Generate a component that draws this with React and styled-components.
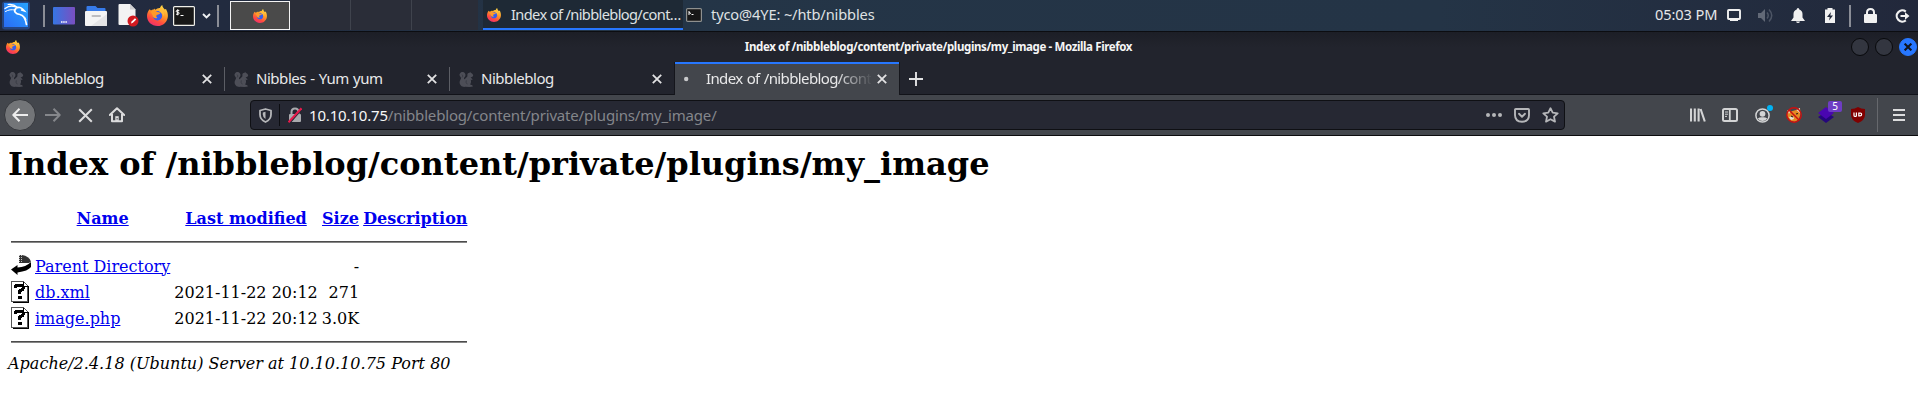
import React from 'react';
import styled, { createGlobalStyle, css } from 'styled-components';

const GlobalStyle = createGlobalStyle`
  html, body { margin: 0; padding: 0; background: #fff; }
  body { overflow: hidden; }
  svg { display: block; flex: none; }
`;

const Screen = styled.div`
  width: 1918px;
  height: 412px;
  display: flex;
  flex-direction: column;
  background: #fff;
  overflow: hidden;
  font-family: 'Noto Sans', 'Open Sans', sans-serif;
`;

/* ---------- desktop panel ---------- */

const Panel = styled.header`
  height: 32px;
  box-sizing: border-box;
  border-bottom: 1px solid #0c0d11;
  display: flex;
  align-items: stretch;
  background: linear-gradient(90deg, #222a3f 0%, #222b3f 12%, #243547 30%, #243446 75%, #22283b 100%);
`;

const Slot = styled.div`
  width: ${(p) => p.$w}px;
  flex: none;
  display: flex;
  align-items: center;
  justify-content: center;
`;

const PanelRule = styled.div`
  width: 2px;
  height: 22px;
  margin: 5px ${(p) => p.$right}px 0 ${(p) => p.$left}px;
  background: #8a8d96;
  flex: none;
`;

const Workspaces = styled.div`
  display: flex;
  width: 248px;
  flex: none;
  padding-bottom: 1px;
`;

const Workspace = styled.div`
  box-sizing: border-box;
  width: 61px;
  background: #2a2d38;
  border-right: 1px solid #3f434d;
  display: flex;
  align-items: center;
  justify-content: center;
  ${(p) => p.$last && css`border-right: 0; flex: 1;`}
  ${(p) => p.$active && css`
    width: 60px;
    height: 29px;
    margin-top: 1px;
    background: #4a4a4a;
    border: 1px solid #f4f4f4;
  `}
`;

const Task = styled.div`
  box-sizing: border-box;
  width: ${(p) => p.$w}px;
  height: 30px;
  padding-left: ${(p) => p.$pad}px;
  display: flex;
  align-items: center;
  gap: ${(p) => p.$gap}px;
  flex: none;
  color: #dfe1e3;
  ${(p) => p.$active && css`
    background: #1e2935;
    box-shadow: inset 0 -2px #2777ff;
  `}
`;

const TaskLabel = styled.span`
  padding-bottom: 2px;
  font-size: 14.6px;
  line-height: 20px;
  letter-spacing: ${(p) => p.$ls}px;
  white-space: nowrap;
`;

const Clock = styled.div`
  margin-left: auto;
  width: 63px;
  font-size: 14.6px;
  line-height: 28px;
  letter-spacing: -0.1px;
  color: #e6e7e9;
  white-space: nowrap;
`;

const Tray = styled.div`
  display: flex;
  width: 200px;
  flex: none;
`;

/* ---------- window ---------- */

const TitleBar = styled.div`
  height: 30px;
  flex: none;
  display: flex;
  align-items: center;
  background: linear-gradient(#1c1e26, #22242d 50%);
`;

const TitleText = styled.div`
  flex: 1;
  text-align: center;
  font-size: 11.5px;
  font-weight: 700;
  line-height: 20px;
  letter-spacing: -0.38px;
  color: #f5f5f5;
  white-space: nowrap;
`;

const WindowButtons = styled.div`
  display: flex;
  gap: 6px;
  padding-right: 1px;
`;

const WindowButton = styled.div`
  box-sizing: border-box;
  width: 18px;
  height: 18px;
  border-radius: 50%;
  border: 1px solid ${(p) => (p.$close ? '#2777ff' : '#08090c')};
  background: ${(p) => (p.$close ? '#2777ff' : '#333640')};
  display: flex;
  align-items: center;
  justify-content: center;
`;

const TabStrip = styled.div`
  height: 33px;
  flex: none;
  display: flex;
  background: #22242d;
  box-shadow: inset 0 -1px #121319;
`;

const Tab = styled.div`
  box-sizing: border-box;
  position: relative;
  width: 225px;
  height: 33px;
  padding: 1px 13px 0 9px;
  display: flex;
  align-items: center;
  color: #e9e9ea;
  ${(p) => p.$rule && css`
    &::after {
      content: '';
      position: absolute;
      right: 0;
      top: 5px;
      width: 1px;
      height: 24px;
      background: #5c5e65;
    }
  `}
  ${(p) => p.$active && css`
    width: 224px;
    padding-right: 12px;
    background: #43464c;
    box-shadow: inset 0 2px #2777ff, -1px 0 #15161c, 1px 0 #15161c;
  `}
`;

const TabTitle = styled.div`
  flex: 1;
  margin-left: 7px;
  padding-bottom: 2px;
  font-size: 15px;
  line-height: 22px;
  letter-spacing: -0.46px;
  word-spacing: 0.8px;
  white-space: nowrap;
  overflow: hidden;
  ${(p) => p.$fade && css`
    margin-right: 6px;
    letter-spacing: -0.62px;
    mask-image: linear-gradient(90deg, #000 130px, transparent 167px);
  `}
`;

const NavBar = styled.div`
  box-sizing: border-box;
  height: 41px;
  flex: none;
  border-bottom: 1px solid #0c0c0e;
  background: #43464c;
  display: flex;
  align-items: center;
`;

const BackButton = styled.div`
  box-sizing: border-box;
  width: 32px;
  height: 32px;
  margin: 0 1px 0 4px;
  border-radius: 50%;
  border: 1px solid #35373c;
  background: #737578;
  display: flex;
  align-items: center;
  justify-content: center;
`;

const UrlBar = styled.div`
  box-sizing: border-box;
  width: 1315px;
  height: 30px;
  margin-left: 117px;
  border: 1px solid #0f1014;
  border-radius: 4px;
  background: #262833;
  display: flex;
  align-items: center;
`;

const UrlRule = styled.div`
  width: 1px;
  height: 22px;
  background: #0c0d11;
`;

const UrlText = styled.div`
  flex: 1;
  font-size: 15px;
  line-height: 24px;
  letter-spacing: -0.17px;
  color: #84868b;
  white-space: nowrap;
  b { font-weight: 400; color: #f8f8f8; }
`;

const Extensions = styled.div`
  display: flex;
  align-items: center;
  margin-left: 117px;
`;

const BadgeHost = styled(Slot)`
  position: relative;
  height: 32px;
`;

const CountBadge = styled.span`
  position: absolute;
  left: 18px;
  top: 2px;
  width: 14px;
  height: 11px;
  border-radius: 2px;
  background: #6e3dc4;
  color: #fff;
  font-size: 10px;
  line-height: 11px;
  text-align: center;
`;

const NoticeDot = styled.span`
  position: absolute;
  left: 21px;
  top: 6px;
  width: 6px;
  height: 6px;
  border-radius: 50%;
  background: #00b3f4;
`;

const NavRule = styled.div`
  width: 1px;
  height: 34px;
  margin: 0 5px 0 3px;
  background: #66686d;
`;

/* ---------- document ---------- */

const Page = styled.main`
  flex: 1;
  padding: 9px 8px 8px;
  color: #000;
  font-family: 'DejaVu Serif', serif;
  font-size: 16px;
  line-height: 19px;
`;

const Heading = styled.h1`
  margin: 0 0 21px;
  font-size: 32px;
  line-height: 38px;
  font-weight: 700;
  white-space: nowrap;
`;

const Listing = styled.table`
  border-spacing: 2px;
  border-collapse: separate;
  white-space: nowrap;
  th, td { padding: 1px; vertical-align: middle; }
  tr { height: 24px; }
`;

const Cell = styled.td`
  text-align: ${(p) => (p.$right ? 'right' : 'left')};
`;

const IconCell = styled.td`
  width: 20px;
  height: 22px;
`;

const Link = styled.a`
  color: #0000ee;
  text-decoration: underline;
`;

const Rule = styled.hr`
  box-sizing: border-box;
  height: 2px;
  margin: 8px 0;
  border: 0;
  border-top: 1px solid #4c4c4c;
  background: #868686;
`;

const RuleRow = styled.tr`
  && { height: 20px; }
`;

const Address = styled.address`
  font-style: italic;
  letter-spacing: 0.02px;
`;

/* ---------- icons ---------- */

const Firefox = ({ size }) => (
  <svg width={size} height={size} viewBox="0 0 22 22">
    <defs>
      <linearGradient id="fx" x1="0.8" y1="0" x2="0.3" y2="1">
        <stop offset="0" stopColor="#ffe04a" />
        <stop offset="0.45" stopColor="#ff9526" />
        <stop offset="0.75" stopColor="#ff4a41" />
        <stop offset="1" stopColor="#ee2f70" />
      </linearGradient>
    </defs>
    <path d="M2.8 4.4 4.2 5.8C5.2 4.9 6 4.7 7 4.7L8 3.6 8.4 5C10 4.2 11.8 3 13.6 3.2 14 1.7 15 .6 16 0c.2 2.2 1.3 3.4 2.7 4.8l1.2-.7c1.2 2.2 2.1 4.7 2 7.3C21.700 17.500 17 22 11 22S0 17.500 0 11.500C0 8.500 1.200 6 2.800 4.400Z" fill="url(#fx)" />
    <circle cx="11" cy="11.300" r="4.900" fill="#355df0" />
    <path d="M4 7c2-1.500 4.500-1.500 6.500.2L14 8c-.5 1.700-2.500 1.800-3.700 2.300-.8 1.400-1 2.200.6 3.200-2.600 1.200-4.800-.3-5.200-2.700Z" fill="#ff9a2a" />
    <path d="M12.500 3.500c4 1 6 4.500 5 8.500-.6-2.500-2-4.300-4.300-5Z" fill="#ffbd3b" />
  </svg>
);

const KaliLogo = () => (
  <svg width="31" height="31" viewBox="0 0 31 31">
    <defs>
      <linearGradient id="kl" x1="0" y1="1" x2="1" y2="0">
        <stop offset="0" stopColor="#2a6cf5" />
        <stop offset="1" stopColor="#27a3ff" />
      </linearGradient>
    </defs>
    <rect x="2" y="1.500" width="28" height="28" rx="3" fill="#2777ff" opacity="0.35" />
    <rect x="4" y="3" width="24" height="24" fill="url(#kl)" />
    <g fill="none" stroke="#fff" strokeLinecap="round">
      <path d="M5 8.500C9 5.500 14 5.500 18 8" strokeWidth="1.300" />
      <path d="M8 4.500c4-.6 7 .5 9.500 2.800" strokeWidth="1.100" />
      <path d="M5.500 11.500c3-1.800 6-2.200 9.500-1.500" strokeWidth="1" />
      <path d="M17 7.500c3-.8 5 .5 7.500 3.500l-3-1" strokeWidth="1.500" />
      <path d="M16 8.500c-3 2.500-.5 5.500 4 6 3.500.6 5.500 4.500 6.500 10" strokeWidth="1.700" />
      <path d="M21 15.500c3 .5 4.300 1.500 5 4" strokeWidth="1" />
    </g>
  </svg>
);

const DesktopIcon = () => (
  <svg width="22" height="18" viewBox="0 0 22 18">
    <defs>
      <linearGradient id="dk"><stop offset="0" stopColor="#3676e4" /><stop offset="1" stopColor="#7a4fc0" /></linearGradient>
    </defs>
    <rect width="22" height="17.500" rx="1" fill="url(#dk)" />
    <path d="M8 15h6" stroke="#fff" strokeWidth="1.500" strokeDasharray="1.500 .7" />
  </svg>
);

const FolderIcon = () => (
  <svg width="22" height="20" viewBox="0 0 22 20">
    <path d="M1.500 1q0-1 1-1h8l2 2h7q1 0 1 1v4h-19Z" fill="#367bea" />
    <rect y="5" width="22" height="15" rx="1" fill="#f4f4f4" />
    <path d="M22 8v11q0 1-1 1H6Z" fill="#e4e4e6" />
    <rect x="6.500" y="9" width="9.500" height="2" rx="1" fill="#bdbdc0" />
  </svg>
);

const EditorIcon = () => (
  <svg width="21" height="23" viewBox="0 0 21 23">
    <path d="M1.500 0H12l5.500 5.500V21H1.500Q.5 21 .5 20V1q0-1 1-1Z" fill="#f3f3f3" />
    <path d="M12 0v5.500h5.500Z" fill="#cfcfd2" />
    <circle cx="15" cy="17" r="5.500" fill="#d21a20" />
    <path d="m13 19.500.6-2 3.400-3.200 1.300 1.300-3.400 3.200Z" fill="#fff" />
  </svg>
);

const PanelTerminal = () => (
  <svg width="22" height="20" viewBox="0 0 22 20">
    <rect x=".6" y=".6" width="20.800" height="18.800" rx="1" fill="#171717" stroke="#efefe9" strokeWidth="1.200" />
    <path d="M6.300 4.400H4.200q-1 .1-1 .9t1 .9h1q1 .2 1 1T5.200 8.200H3M4.700 3.300v6M7.500 9.500h3" fill="none" stroke="#fff" strokeWidth="1" />
  </svg>
);

const TaskTerminal = () => (
  <svg width="16" height="14" viewBox="0 0 16 14">
    <rect x=".6" y=".6" width="14.800" height="12.800" rx="1" fill="#171717" stroke="#8e908f" strokeWidth="1.200" />
    <path d="M3 3v4M3 4.500l2 1M5.500 6.500h2" fill="none" stroke="#fff" strokeWidth="1" />
  </svg>
);

const Chevron = () => (
  <svg width="9" height="6" viewBox="0 0 9 6">
    <path d="m1 1 3.500 3.500L8 1" fill="none" stroke="#eef0f2" strokeWidth="1.900" />
  </svg>
);

const DisplayIcon = () => (
  <svg width="14" height="13" viewBox="0 0 14 13">
    <rect x="1" y="1" width="12" height="9" rx=".8" fill="none" stroke="#f1f1f1" strokeWidth="1.900" />
    <path d="M3 10.500h8v1.500H3Z" fill="#f1f1f1" />
  </svg>
);

const VolumeIcon = () => (
  <svg width="16" height="15" viewBox="0 0 16 15">
    <path d="M0 5h3l4-4v13L3 10H0Z" fill="#626977" />
    <path d="M9 4.500q2.500 3 0 6M11 1.500q5.500 6 0 12" fill="none" stroke="#4d5565" strokeWidth="1.500" />
  </svg>
);

const BellIcon = () => (
  <svg width="14" height="15" viewBox="0 0 14 15">
    <path d="M7 0q1.300 0 1.300 1.500Q11.500 2.500 11.500 6v3.500L14 13H0l2.500-3.500V6q0-3.500 3.200-4.500Q5.700 0 7 0ZM5 13.500h4Q8.500 15 7 15t-2-1.500Z" fill="#f1f1f1" />
  </svg>
);

const BatteryIcon = () => (
  <svg width="10" height="15" viewBox="0 0 10 15">
    <path d="M2.500 0h5v1.500H10V15H0V1.500h2.500Z" fill="#f1f1f1" />
    <path d="M6 4 2 9h2.700L4 12.500 8 7.500H5.300Z" fill="#22293b" />
  </svg>
);

const PanelLock = () => (
  <svg width="13" height="15" viewBox="0 0 13 15">
    <rect y="6" width="13" height="9" rx="1" fill="#f1f1f1" />
    <path d="M3 7V4.500Q3 1 6.500 1T10 4.500V7" fill="none" stroke="#f1f1f1" strokeWidth="2" />
  </svg>
);

const LogoutIcon = () => (
  <svg width="15" height="14" viewBox="0 0 15 14">
    <path d="M10.800 2.600A5.600 5.600 0 1 0 10.800 11.400" fill="none" stroke="#f1f1f1" strokeWidth="2.200" />
    <path d="M5.500 6H10V3.300L14.500 7 10 10.700V8H5.500Z" fill="#f1f1f1" />
  </svg>
);

const Squirrel = () => (
  <svg width="15" height="17" viewBox="0 0 15 17">
    <path d="M6.500 15.800C3 16.500.600 14 .600 11.200c0-2.200 2-3 1.200-4.700S-.2 4 1 2.400 4.700.500 5.900 2.200s.4 3.300-.6 4.300c-.5 1-.3 1.700.5 1.700.9-1.500 2.400-2 2.700-3.200C7.900 3 9 1.800 10.500 1.800l.8-1 .5 1.300c1.600.4 2.600 1.600 2.300 2.900-.5 1-2 1.200-2.500 1.500l2 1.700-.6.900-1.400-.7c.7 1.500.6 3.500-.5 5l2.200.8.600 1.300-3.400.5Z" fill="#4d4e57" />
    <path d="M3 3.500q2 1.500 0 3M7.300 9.300q-1 2 1 4" stroke="#3a3c45" fill="none" />
  </svg>
);

const CloseIcon = ({ size, width = 1.8, color = '#e2e2e3' }) => (
  <svg width={size} height={size} viewBox="0 0 10 10">
    <path d="m.8.800 8.400 8.400M9.200.800.800 9.200" stroke={color} strokeWidth={width} />
  </svg>
);

const PlusIcon = () => (
  <svg width="14" height="14" viewBox="0 0 14 14">
    <path d="M7 0v14M0 7h14" stroke="#e2e2e3" strokeWidth="1.900" />
  </svg>
);

const Spinner = () => (
  <svg width="15" height="16" viewBox="0 0 15 16"><circle cx="2.200" cy="8" r="2.200" fill="#c8c9cb" /></svg>
);

const Arrow = ({ flip, color }) => (
  <svg width="16" height="14" viewBox="0 0 16 14">
    <path
      d={flip ? 'M0 7h15M8.500.8 14.700 7l-6.200 6.200' : 'M16 7H1M7.500.8 1.300 7l6.200 6.200'}
      fill="none" stroke={color} strokeWidth="2" strokeLinejoin="round"
    />
  </svg>
);

const HomeIcon = () => (
  <svg width="16" height="16" viewBox="0 0 16 16">
    <path d="M.8 8 8 1.200 15.200 8M3 7v7.200h10V7" fill="none" stroke="#dcdcdd" strokeWidth="2" strokeLinejoin="round" strokeLinecap="round" />
    <path d="M6.300 14V9.200h3.400V14" fill="#dcdcdd" />
    <rect x="7.600" y="11" width="1" height="1.500" fill="#43464c" />
  </svg>
);

const ShieldIcon = () => (
  <svg width="13" height="15" viewBox="0 0 13 15">
    <path d="M6.500 1 12 2.500v4q0 5-5.500 7.500Q1 11.500 1 6.500v-4Z" fill="none" stroke="#b5b6b9" strokeWidth="1.800" strokeLinejoin="round" />
    <path d="M6.500 3.800v7.300Q3.800 9.500 3.800 6.500V4.400Z" fill="#b5b6b9" />
  </svg>
);

const InsecureLock = () => (
  <svg width="14" height="16" viewBox="0 0 14 16">
    <rect x="1" y="7" width="12" height="8" rx="1" fill="#a9aaae" />
    <path d="M3.500 8V5Q3.500 1.500 7 1.500T10.500 5v3" fill="none" stroke="#a9aaae" strokeWidth="2" />
    <path d="m1.500 16.300 13-15" stroke="#262833" strokeWidth="1.500" />
    <path d="m.5 15.200 13-14" stroke="#e8194b" strokeWidth="2" />
  </svg>
);

const DotsIcon = () => (
  <svg width="16" height="4" viewBox="0 0 16 4" fill="#b5b6b9">
    <circle cx="2" cy="2" r="2" /><circle cx="8" cy="2" r="2" /><circle cx="14" cy="2" r="2" />
  </svg>
);

const PocketIcon = () => (
  <svg width="16" height="15" viewBox="0 0 16 15" fill="none" stroke="#b5b6b9" strokeWidth="1.900" strokeLinecap="round" strokeLinejoin="round">
    <path d="M1.800 1h12.400q.8 0 .8.800V7q0 6.500-7 6.800Q1 13.500 1 7V1.800Q1 1 1.800 1Z" />
    <path d="M5 5.800 8 8.700l3-2.900" />
  </svg>
);

const StarIcon = () => (
  <svg width="17" height="16" viewBox="0 0 17 16">
    <path d="m8.500 1.200 2.200 4.500 5 .6-3.700 3.400 1 4.900-4.500-2.400L4 14.600l1-4.900L1.300 6.300l5-.6Z" fill="none" stroke="#b5b6b9" strokeWidth="1.800" strokeLinejoin="round" />
  </svg>
);

const LibraryIcon = () => (
  <svg width="16" height="14" viewBox="0 0 16 14">
    <path d="M1 .5v13M4.800 .5v13M8.600 .5v13M10.600 1l4.200 12.500" stroke="#d3d4d5" strokeWidth="2.100" />
  </svg>
);

const SidebarIcon = () => (
  <svg width="16" height="14" viewBox="0 0 16 14" fill="none" stroke="#d3d4d5">
    <rect x="1" y="1" width="14" height="12" rx="1.500" strokeWidth="2" />
    <path d="M7.800 1v12" strokeWidth="1.800" />
    <path d="M3 4h3M3 6.200h3M3 8.400h2" strokeWidth="1" />
  </svg>
);

const AccountIcon = () => (
  <svg width="15" height="15" viewBox="0 0 15 15">
    <circle cx="7.500" cy="7.500" r="6.600" fill="none" stroke="#d3d4d5" strokeWidth="1.500" />
    <circle cx="7.500" cy="5.800" r="2.900" fill="#d3d4d5" />
    <path d="M2.800 10.500Q5 8.800 7.500 9.300q2.500-.5 4.700 1.200Q10.500 13 7.500 13t-4.700-2.500Z" fill="#d3d4d5" />
  </svg>
);

const FoxyIcon = () => (
  <svg width="16" height="16" viewBox="0 0 16 16">
    <path d="M1.500 3 5 4.500 10 3l4-2 .5 6-1.500 5-4 3-5-1.500L1 9Z" fill="#e58a24" />
    <path d="m1.500 3 3 1-1.500 3ZM14 1l-3.500 2L14 6ZM3 10l4-1 1 3-3 1Z" fill="#e6dfd5" />
    <path d="m5 9 2 1M10 7l2-.5" stroke="#2b1a10" strokeWidth="1.200" />
    <circle cx="8" cy="8" r="7.200" fill="none" stroke="#cc1010" strokeWidth="1.400" />
    <path d="m3 3 10 10" stroke="#cc1010" strokeWidth="1.500" />
  </svg>
);

const LayersIcon = () => (
  <svg width="16" height="16" viewBox="0 0 16 16">
    <path d="m0 10 8-5 8 5-8 6Z" fill="#25067c" />
    <path d="m0 6 8-6 8 6-8 6Z" fill="#4a06b0" />
  </svg>
);

const UBlockIcon = () => (
  <svg width="14" height="16" viewBox="0 0 14 16">
    <path d="M7 0q3 2 7 2v6q0 5-7 8-7-3-7-8V2q4 0 7-2Z" fill="#800000" />
    <path d="M3 5.500v3q0 1 1.200 1t1.200-1v-3M7.800 6.100v2.800h1.400q1.400 0 1.400-1.400T9.200 6.100Z" fill="none" stroke="#fff" strokeWidth="1.200" />
  </svg>
);

const MenuIcon = () => (
  <svg width="12" height="12" viewBox="0 0 12 12">
    <path d="M0 1h12M0 6h12M0 11h12" stroke="#dcdcdd" strokeWidth="1.900" />
  </svg>
);

const BackIcon = () => (
  <svg width="20" height="22" viewBox="0 0 20 22">
    <path d="M8 0h3q7 1 9 6.500l-2 1.500H8Z" fill="#333" />
    <path d="M8.500 0v7M10.500 0v7" stroke="#fff" strokeWidth=".7" strokeDasharray="1 1" />
    <path d="m0 14.500 6.500-4.500v2.500Q15 12 20 7v5q-3 4-13.500 5.500V20Z" fill="#000" />
  </svg>
);

const UnknownIcon = () => (
  <svg width="20" height="22" viewBox="0 0 20 22" shapeRendering="crispEdges">
    <path d="M.5.500h12l4 4v16H.5Z" fill="#fff" stroke="#555" />
    <path d="M12.500.500v4.500h4.500M17.500 5v16M2 21.500h16" fill="none" stroke="#000" />
    <path d="M4.500 7V5.500Q5 4 8.500 4t4 2.500Q12.500 9 8.500 10v2.500" fill="none" stroke="#000" strokeWidth="3" />
    <rect x="7" y="14.500" width="4" height="3" fill="#000" />
  </svg>
);

/* ---------- data ---------- */

const tabs = ['Nibbleblog', 'Nibbles - Yum yum', 'Nibbleblog'];

const files = [
  { icon: <BackIcon />, name: 'Parent Directory', date: '', size: '-' },
  { icon: <UnknownIcon />, name: 'db.xml', date: '2021-11-22 20:12', size: '271' },
  { icon: <UnknownIcon />, name: 'image.php', date: '2021-11-22 20:12', size: '3.0K' },
];

export default function App() {
  return (
    <Screen>
      <GlobalStyle />
      <Panel>
        <Slot $w={31}><KaliLogo /></Slot>
        <PanelRule $left={12} $right={3} />
        <Slot $w={32}><DesktopIcon /></Slot>
        <Slot $w={32}><FolderIcon /></Slot>
        <Slot $w={32}><EditorIcon /></Slot>
        <Slot $w={26}><Firefox size={21} /></Slot>
        <Slot $w={28}><PanelTerminal /></Slot>
        <Slot $w={16}><Chevron /></Slot>
        <PanelRule $left={3} $right={11} />
        <Workspaces>
          <Workspace $active><Firefox size={14} /></Workspace>
          <Workspace />
          <Workspace />
          <Workspace $last />
        </Workspaces>
        <Slot $w={5} />
        <Task $active $w={200} $pad={4} $gap={10}>
          <Firefox size={14} />
          <TaskLabel $ls={-0.62}>Index of /nibbleblog/cont…</TaskLabel>
        </Task>
        <Task $w={200} $pad={3} $gap={9}>
          <TaskTerminal />
          <TaskLabel $ls={-0.12}>tyco@4YE: ~/htb/nibbles</TaskLabel>
        </Task>
        <Clock>05:03 PM</Clock>
        <Tray>
          <Slot $w={32}><DisplayIcon /></Slot>
          <Slot $w={32}><VolumeIcon /></Slot>
          <Slot $w={32}><BellIcon /></Slot>
          <Slot $w={32}><BatteryIcon /></Slot>
          <PanelRule $left={3} $right={3} />
          <Slot $w={32}><PanelLock /></Slot>
          <Slot $w={32}><LogoutIcon /></Slot>
        </Tray>
      </Panel>

      <TitleBar>
        <Slot $w={26}><Firefox size={14} /></Slot>
        <TitleText>Index of /nibbleblog/content/private/plugins/my_image - Mozilla Firefox</TitleText>
        <WindowButtons>
          <WindowButton />
          <WindowButton />
          <WindowButton $close><CloseIcon size={8} width={2.6} color="#10131c" /></WindowButton>
        </WindowButtons>
      </TitleBar>

      <TabStrip>
        {tabs.map((title, i) => (
          <Tab key={i} $rule={i < 2}>
            <Squirrel />
            <TabTitle>{title}</TabTitle>
            <CloseIcon size={10} />
          </Tab>
        ))}
        <Tab $active>
          <Spinner />
          <TabTitle $fade>Index of /nibbleblog/cont</TabTitle>
          <CloseIcon size={10} />
        </Tab>
        <Slot $w={33}><PlusIcon /></Slot>
      </TabStrip>

      <NavBar>
        <BackButton><Arrow color="#ededed" /></BackButton>
        <Slot $w={32}><Arrow flip color="#85878b" /></Slot>
        <Slot $w={32}><CloseIcon size={15} width={1.35} color="#dcdcdd" /></Slot>
        <Slot $w={32}><HomeIcon /></Slot>
        <UrlBar>
          <Slot $w={28}><ShieldIcon /></Slot>
          <UrlRule />
          <Slot $w={29}><InsecureLock /></Slot>
          <UrlText><b>10.10.10.75</b>/nibbleblog/content/private/plugins/my_image/</UrlText>
          <Slot $w={28}><DotsIcon /></Slot>
          <Slot $w={28}><PocketIcon /></Slot>
          <Slot $w={28}><StarIcon /></Slot>
        </UrlBar>
        <Extensions>
          <Slot $w={32}><LibraryIcon /></Slot>
          <Slot $w={32}><SidebarIcon /></Slot>
          <BadgeHost $w={32}><AccountIcon /><NoticeDot /></BadgeHost>
          <Slot $w={32}><FoxyIcon /></Slot>
          <BadgeHost $w={32}><LayersIcon /><CountBadge>5</CountBadge></BadgeHost>
          <Slot $w={32}><UBlockIcon /></Slot>
          <NavRule />
          <Slot $w={32}><MenuIcon /></Slot>
        </Extensions>
      </NavBar>

      <Page>
        <Heading>Index of /nibbleblog/content/private/plugins/my_image</Heading>
        <Listing>
          <tbody>
            <tr>
              <th />
              <th><Link href="#name">Name</Link></th>
              <th><Link href="#modified">Last modified</Link></th>
              <th><Link href="#size">Size</Link></th>
              <th><Link href="#description">Description</Link></th>
            </tr>
            <RuleRow><td colSpan={5}><Rule /></td></RuleRow>
            {files.map((f) => (
              <tr key={f.name}>
                <IconCell>{f.icon}</IconCell>
                <Cell><Link href="#file">{f.name}</Link></Cell>
                <Cell $right>{f.date}</Cell>
                <Cell $right>{f.size}</Cell>
                <Cell />
              </tr>
            ))}
            <RuleRow><td colSpan={5}><Rule /></td></RuleRow>
          </tbody>
        </Listing>
        <Address>Apache/2.4.18 (Ubuntu) Server at 10.10.10.75 Port 80</Address>
      </Page>
    </Screen>
  );
}
